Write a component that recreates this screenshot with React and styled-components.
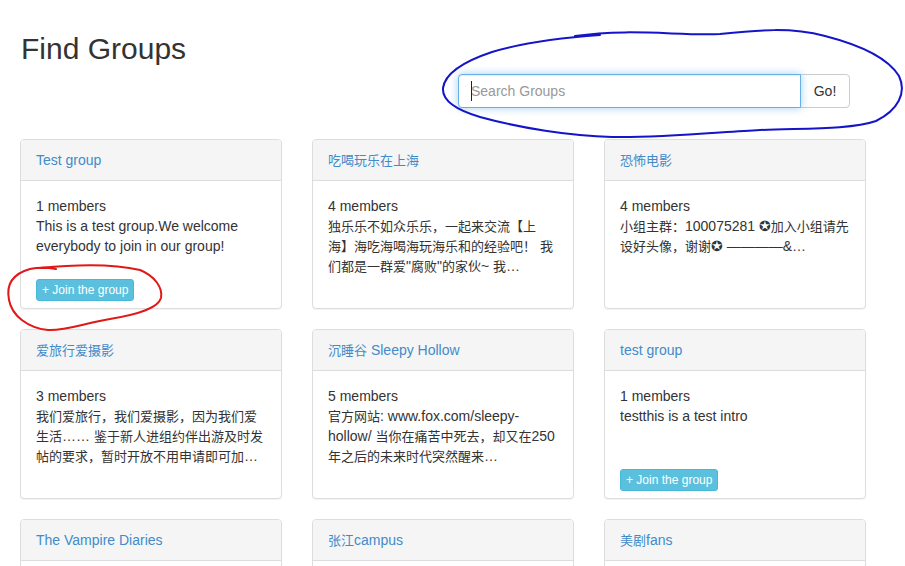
import React from "react";
import styled, { createGlobalStyle } from "styled-components";

const GlobalStyle = createGlobalStyle`
  html, body { margin: 0; padding: 0; background: #fff; overflow: hidden; }
  body {
    font-family: "Liberation Sans", Arial, "Noto Sans CJK SC", "DejaVu Sans", sans-serif;
    font-size: 14px;
    line-height: 20px;
    color: #333;
  }
  * { box-sizing: border-box; }
`;

const Page = styled.div`
  position: relative;
  width: 905px;
  height: 566px;
  overflow: hidden;
  padding: 32px 39px 0 20px;
`;

const Title = styled.h2`
  margin: 0 0 0 1px;
  font-size: 30px;
  line-height: 33px;
  font-weight: 500;
  color: #333;
`;

const SearchRow = styled.div`
  display: grid;
  grid-template-columns: 1fr 1fr;
  column-gap: 30px;
  margin: 9px 0 31px;
`;

const SearchGroup = styled.form`
  grid-column: 2;
  display: flex;
  width: 392px;
`;

const SearchField = styled.div`
  position: relative;
  width: 343px;
`;

const SearchInput = styled.input`
  width: 100%;
  height: 34px;
  padding: 6px 12px;
  font-family: inherit;
  font-size: 14px;
  color: #555;
  border: 1px solid #66afe9;
  border-radius: 4px 0 0 4px;
  outline: none;
  box-shadow: inset 0 1px 1px rgba(0, 0, 0, 0.075), 0 0 8px rgba(102, 175, 233, 0.6);
  &::placeholder { color: #999; }
`;

const Caret = styled.span`
  position: absolute;
  left: 13px;
  top: 7px;
  width: 1px;
  height: 20px;
  background: #222;
`;

const GoButton = styled.button`
  width: 50px;
  height: 34px;
  margin-left: -1px;
  padding: 6px 0;
  font-family: inherit;
  font-size: 14px;
  line-height: 20px;
  color: #333;
  background: #fff;
  border: 1px solid #ccc;
  border-radius: 0 4px 4px 0;
`;

const Grid = styled.div`
  display: grid;
  grid-template-columns: repeat(3, 262px);
  column-gap: 30px;
  row-gap: 20px;
`;

const Card = styled.div`
  height: 170px;
  background: #fff;
  border: 1px solid #ddd;
  border-radius: 4px;
  box-shadow: 0 1px 1px rgba(0, 0, 0, 0.05);
  overflow: hidden;
`;

const CardHeading = styled.div`
  padding: 10px 15px;
  background: #f5f5f5;
  border-bottom: 1px solid #ddd;
  line-height: 20px;
`;

const CardTitle = styled.a`
  color: #428bca;
  text-decoration: none;
  white-space: nowrap;
`;

const CardBody = styled.div`
  padding: 15px;
`;

const Members = styled.div`
  height: 20px;
`;

const Description = styled.div`
  height: 60px;
  overflow: hidden;
`;

const Line = styled.div`
  white-space: nowrap;
`;

const Han = styled.span`
  font-family: "Noto Sans CJK SC", sans-serif;
  font-size: 13px;
`;

const JoinButton = styled.button`
  display: inline-block;
  margin-top: 3px;
  padding: 1px 5px;
  font-family: inherit;
  font-size: 12px;
  line-height: 18px;
  color: #fff;
  background: #5bc0de;
  border: 1px solid #46b8da;
  border-radius: 3px;
`;

const Annotations = styled.svg`
  position: absolute;
  top: 0;
  left: 0;
  pointer-events: none;
`;

const CJK = /([\u2e80-\u9fff\u3000-\u303f\uff00-\uffef]+)/;

function Mixed({ text }) {
  return text
    .split(CJK)
    .map((part, i) => (i % 2 === 1 ? <Han key={i}>{part}</Han> : part));
}

const groups = [
  {
    title: "Test group",
    members: 1,
    lines: ["This is a test group.We welcome", "everybody to join in our group!"],
    join: true,
  },
  {
    title: "吃喝玩乐在上海",
    members: 4,
    lines: [
      "独乐乐不如众乐乐，一起来交流【上",
      "海】海吃海喝海玩海乐和的经验吧！ 我",
      "们都是一群爱\"腐败\"的家伙~ 我…",
    ],
  },
  {
    title: "恐怖电影",
    members: 4,
    lines: ["小组主群：100075281 ✪加入小组请先", "设好头像，谢谢✪ ————&…"],
  },
  {
    title: "爱旅行爱摄影",
    members: 3,
    lines: [
      "我们爱旅行，我们爱摄影，因为我们爱",
      "生活…… 鉴于新人进组约伴出游及时发",
      "帖的要求，暂时开放不用申请即可加…",
    ],
  },
  {
    title: "沉睡谷 Sleepy Hollow",
    members: 5,
    lines: [
      "官方网站: www.fox.com/sleepy-",
      "hollow/ 当你在痛苦中死去，却又在250",
      "年之后的未来时代突然醒来…",
    ],
  },
  {
    title: "test group",
    members: 1,
    lines: ["testthis is a test intro"],
    join: true,
  },
  { title: "The Vampire Diaries", lines: [] },
  { title: "张江campus", lines: [] },
  { title: "美剧fans", lines: [] },
];

export default function App() {
  return (
    <>
      <GlobalStyle />
      <Page>
        <Title>Find Groups</Title>
        <SearchRow>
          <SearchGroup onSubmit={(e) => e.preventDefault()}>
            <SearchField>
              <SearchInput type="text" placeholder="Search Groups" />
              <Caret />
            </SearchField>
            <GoButton type="submit">Go!</GoButton>
          </SearchGroup>
        </SearchRow>
        <Grid>
          {groups.map((g) => (
            <Card key={g.title}>
              <CardHeading>
                <CardTitle href="#">
                  <Mixed text={g.title} />
                </CardTitle>
              </CardHeading>
              <CardBody>
                {g.members != null && <Members>{g.members} members</Members>}
                {g.lines.length > 0 && (
                  <Description>
                    {g.lines.map((l) => (
                      <Line key={l}>
                        <Mixed text={l} />
                      </Line>
                    ))}
                  </Description>
                )}
                {g.join && <JoinButton>+ Join the group</JoinButton>}
              </CardBody>
            </Card>
          ))}
        </Grid>
        <Annotations width="905" height="566" viewBox="0 0 905 566">
          <path
            d="M 575 36 C 630 28, 680 36, 720 34 C 760 30, 790 27, 825 36 C 860 45, 888 58, 899 76 C 907 93, 898 110, 876 121 C 850 130, 800 128, 760 130 C 720 132, 660 138, 612 137 C 570 136, 520 128, 480 117 C 456 110, 442 100, 443 88 C 445 74, 462 62, 492 52 C 522 43, 555 38, 600 35"
            fill="none"
            stroke="#1414c8"
            strokeWidth="2"
            strokeLinecap="round"
          />
          <path
            d="M 40 268 C 70 265, 110 263, 140 270 C 155 276, 163 288, 161 298 C 158 308, 140 314, 110 319 C 85 323, 65 331, 48 330 C 28 328, 12 316, 9 300 C 6 285, 12 274, 30 269 C 40 267, 50 268, 56 269"
            fill="none"
            stroke="#e01818"
            strokeWidth="2"
            strokeLinecap="round"
          />
        </Annotations>
      </Page>
    </>
  );
}
